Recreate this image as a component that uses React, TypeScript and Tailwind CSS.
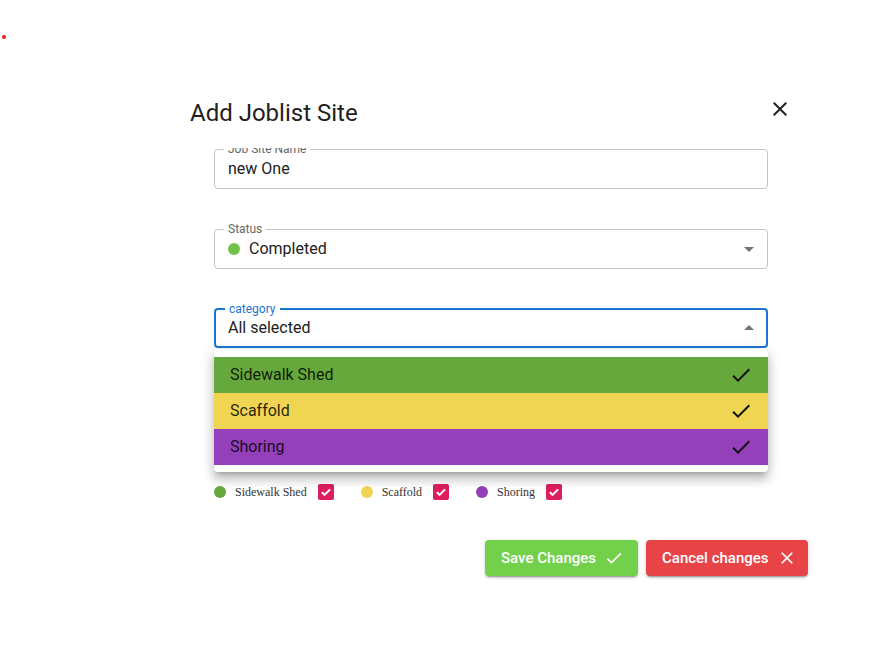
import React from "react";

const CHECK = "M9 16.17 4.83 12l-1.42 1.41L9 19 21 7l-1.41-1.41z";
const CLOSE = "M19 6.41 17.59 5 12 10.59 6.41 5 5 6.41 10.59 12 5 17.59 6.41 19 12 13.41 17.59 19 19 17.59 13.41 12z";

function Icon({ d, className }: { d: string; className?: string }) {
  return (
    <svg viewBox="0 0 24 24" className={className} fill="currentColor">
      <path d={d} />
    </svg>
  );
}

const categories = [
  { name: "Sidewalk Shed", row: "bg-[#66a83b]", dot: "bg-[#66a83b]" },
  { name: "Scaffold", row: "bg-[#efd552]", dot: "bg-[#efd552]" },
  { name: "Shoring", row: "bg-[#9440bb]", dot: "bg-[#9440bb]" },
];

function Field({
  label,
  focused,
  children,
}: {
  label: string;
  focused?: boolean;
  children: React.ReactNode;
}) {
  return (
    <div
      className={
        focused
          ? "relative h-[40px] w-[554px] rounded-[4px] border-2 border-[#1976d2] flex items-center pl-[12px]"
          : "relative h-[40px] w-[554px] rounded-[4px] border border-[#c4c4c4] flex items-center pl-[13px]"
      }
    >
      <span
        className={
          focused
            ? "absolute -top-[8px] left-[9px] px-[4px] bg-white text-[12px] leading-[14px] text-[#1976d2]"
            : "absolute -top-[8px] left-[9px] px-[4px] bg-white text-[12px] leading-[14px] text-[#666]"
        }
      >
        {label}
      </span>
      {children}
    </div>
  );
}

export default function App() {
  return (
    <div className="relative w-[894px] h-[657px] bg-white overflow-hidden font-['Roboto','Liberation_Sans',sans-serif]">
      <span className="absolute left-[2px] top-[35px] w-[4px] h-[4px] rounded-full bg-[#e02020]" />

      <div className="pl-[190px] pt-[97px] w-[792px]">
        <div className="flex items-start justify-between h-[32px]">
          <h2 className="text-[24px] leading-[32px] text-[#222]">Add Joblist Site</h2>
          <Icon d={CLOSE} className="w-[24px] h-[24px] text-[#222]" />
        </div>

        {/* scrolled content: the first label is cut by the top edge */}
        <div className="mt-[19px] h-[358px] overflow-hidden pl-[24px]">
          <div className="mt-[1px]">
            <Field label="Job Site Name">
              <span className="text-[16px] text-[#212121]">new One</span>
            </Field>
          </div>

          <div className="mt-[40px]">
            <Field label="Status">
              <span className="w-[12px] h-[12px] rounded-full bg-[#72c24a]" />
              <span className="ml-[9px] text-[16px] text-[#212121]">Completed</span>
              <svg viewBox="0 0 24 24" className="absolute right-[6px] top-[7px] w-[24px] h-[24px] text-[#757575]" fill="currentColor">
                <path d="M7 10l5 5 5-5z" />
              </svg>
            </Field>
          </div>

          <div className="relative mt-[39px] w-[554px]">
            <Field label="category" focused>
              <span className="text-[16px] text-[#212121]">All selected</span>
              <svg viewBox="0 0 24 24" className="absolute right-[5px] top-[6px] w-[24px] h-[24px] text-[#757575]" fill="currentColor">
                <path d="M7 14l5-5 5 5z" />
              </svg>
            </Field>
            <div className="absolute left-0 top-[41px] w-[554px] z-10 bg-white rounded-[4px] pt-[8px] pb-[7px] shadow-[0_5px_5px_-3px_rgba(0,0,0,0.2),0_8px_10px_1px_rgba(0,0,0,0.14),0_3px_14px_2px_rgba(0,0,0,0.12)]">
              {categories.map((c) => (
                <div key={c.name} className={`${c.row} h-[36px] flex items-center justify-between pl-[16px] pr-[15px]`}>
                  <span className="text-[16px] text-black/85">{c.name}</span>
                  <Icon d={CHECK} className="w-[24px] h-[24px] text-[#111]" />
                </div>
              ))}
            </div>
          </div>

          <div className="mt-[136px] flex items-center h-[16px] gap-[27px]">
            {categories.map((c) => (
              <div key={c.name} className="flex items-center">
                <span className={`${c.dot} w-[12px] h-[12px] rounded-full`} />
                <span className="ml-[9px] text-[12px] text-[#333] font-['Liberation_Serif',serif]">{c.name}</span>
                <span className="ml-[11px] w-[16px] h-[16px] rounded-[2px] bg-[#dc1e5e] flex items-center justify-center">
                  <svg viewBox="0 0 24 24" className="w-[14px] h-[14px] text-white" fill="none" stroke="currentColor" strokeWidth="3.5">
                    <path d="M5 12.5l4.5 4.5L19 7.5" />
                  </svg>
                </span>
              </div>
            ))}
          </div>
        </div>
      </div>

      <div className="w-[808px] flex justify-end gap-[8px] mt-[34px]">
        <button className="h-[36px] w-[153px] rounded-[4px] bg-[#72d04b] text-white text-[15px] font-medium flex items-center pl-[16px] shadow-[0_3px_1px_-2px_rgba(0,0,0,0.2),0_2px_2px_0_rgba(0,0,0,0.14),0_1px_5px_0_rgba(0,0,0,0.12)]">
          Save Changes
          <Icon d={CHECK} className="ml-[8px] w-[20px] h-[20px]" />
        </button>
        <button className="h-[36px] w-[162px] rounded-[4px] bg-[#e84347] text-white text-[15px] font-medium flex items-center pl-[16px] shadow-[0_3px_1px_-2px_rgba(0,0,0,0.2),0_2px_2px_0_rgba(0,0,0,0.14),0_1px_5px_0_rgba(0,0,0,0.12)]">
          Cancel changes
          <Icon d={CLOSE} className="ml-[8px] w-[20px] h-[20px]" />
        </button>
      </div>
    </div>
  );
}
